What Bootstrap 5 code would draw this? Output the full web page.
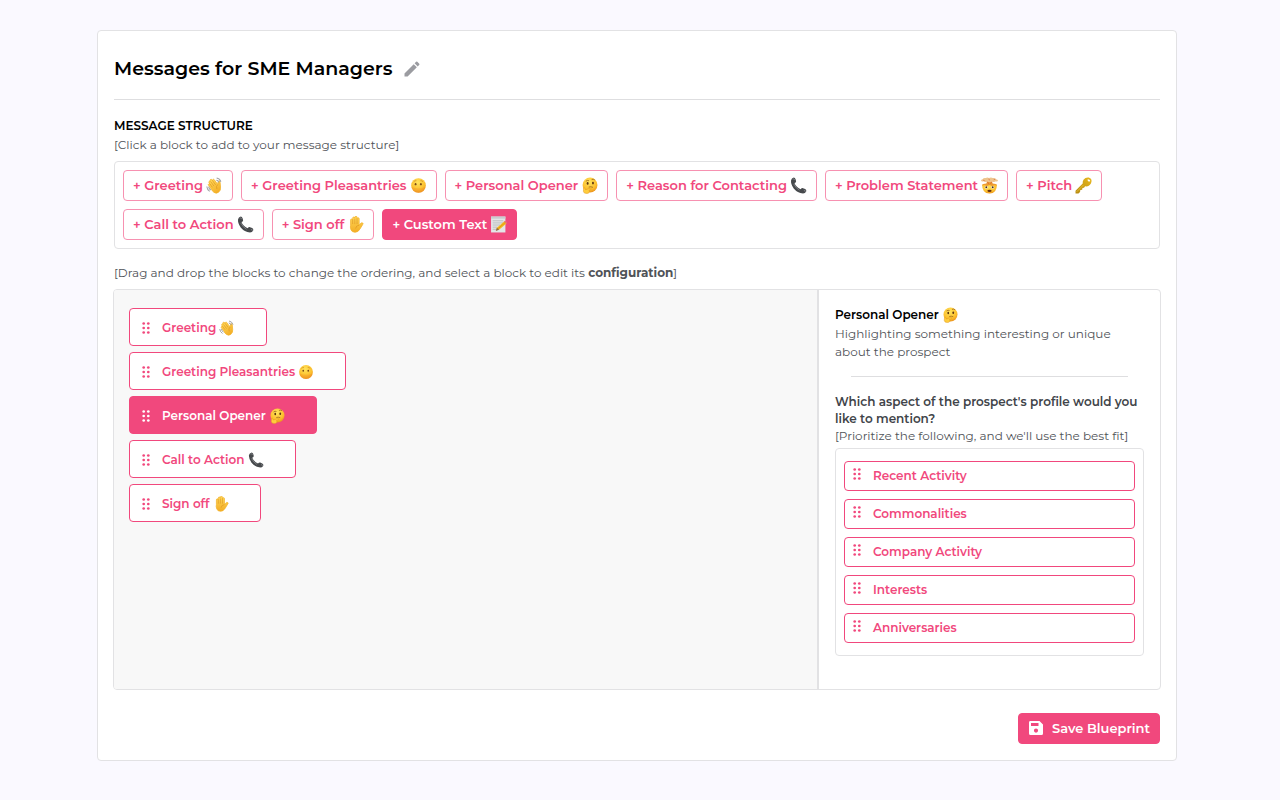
<!DOCTYPE html>
<html lang="en">
<head>
<meta charset="utf-8">
<meta name="viewport" content="width=device-width, initial-scale=1">
<title>Messages for SME Managers</title>
<link href="https://cdn.jsdelivr.net/npm/bootstrap@5.3.0/dist/css/bootstrap.min.css" rel="stylesheet">
<style>
  :root { --pink: #f1487d; --line: #e2e2e4; --soft: #505358; }
  body { background: #faf9ff; font-family: Montserrat, Inter, "Liberation Sans", sans-serif; font-size: 12px; line-height: 18px; color: #000; }
  .page { padding: 30px 103px 39px 97px; }
  .sheet { background: #fff; border: 1px solid var(--line); border-radius: 4px; padding: 16px; }
  .sheet-title { font-size: 19px; line-height: 28px; font-weight: 600; }
  .title-row { height: 53px; padding-bottom: 8px; border-bottom: 1px solid #dedee0; gap: 9px; }
  .pencil { width: 20px; height: 20px; color: #9b9ca1; }
  .label-caps { font-size: 12px; line-height: 20px; font-weight: 600; }
  .soft { color: var(--soft); }
  .hint { margin: 0 0 7px; }
  section + .hint { margin-top: 15px; }
  .outlined { border: 1px solid var(--line); border-radius: 4px; }
  .emo { width: 17px; height: 17px; flex: none; margin-left: 3px; }
  .btn-pink { --bs-btn-color: var(--pink); --bs-btn-bg: #fff; --bs-btn-border-color: #f791b1;
    --bs-btn-hover-color: #fff; --bs-btn-hover-bg: var(--pink); --bs-btn-hover-border-color: var(--pink);
    --bs-btn-active-color: #fff; --bs-btn-active-bg: var(--pink); --bs-btn-active-border-color: var(--pink);
    --bs-btn-font-size: 13px; --bs-btn-font-weight: 600; --bs-btn-line-height: 20px;
    --bs-btn-border-radius: 4px; padding: 4px 9px 5px; height: 31px; }
  .btn-pink.filled { --bs-btn-color: #fff; --bs-btn-bg: var(--pink); --bs-btn-border-color: var(--pink); }
  .workspace { margin: 0 -1px; min-height: 401px; overflow: hidden; }
  .canvas { background: #f8f8f8; border-right: 2px solid var(--line); padding: 18px 15px; gap: 6px; }
  .settings { flex: 0 0 341px; padding: 15px 16px; }
  .canvas, .settings { min-width: 0; }
  .block { height: 38px; padding: 1px 31px 0 8px; background: #fff; color: var(--pink); border: 1px solid var(--pink); border-radius: 4px; font-weight: 600; }
  .block.filled { background: var(--pink); color: #fff; }
  .block .emo, .settings .emo { width: 16px; height: 16px; }
  .grip { width: 16px; height: 16px; flex: none; }
  .options { margin-top: 3px; padding: 12px 8px; }
  .option { height: 30px; padding: 0 4px; color: var(--pink); border: 1px solid var(--pink); border-radius: 4px; font-weight: 600; }
  .option .grip { margin-bottom: 4px; }
  .question { line-height: 17px; font-weight: 600; color: #414449; }
  .rule { height: 1px; background: #dedee0; margin: 15px 16px 16px; }
  .actions { margin-top: 23px; }
</style>
</head>
<body>
<svg width="0" height="0" class="position-absolute" aria-hidden="true">
  <defs>
    <radialGradient id="face" cx=".45" cy=".3" r=".75"><stop offset="0" stop-color="#ffe45c"/><stop offset=".65" stop-color="#fcbf2d"/><stop offset="1" stop-color="#e88a1a"/></radialGradient>
    <linearGradient id="skin" x2="0" y2="1"><stop offset="0" stop-color="#ffd95a"/><stop offset="1" stop-color="#f3ad25"/></linearGradient>
    <linearGradient id="gold" x1="1" x2="0" y2="1"><stop offset="0" stop-color="#e9b91d"/><stop offset="1" stop-color="#b58a12"/></linearGradient>
    <g id="hand">
      <path d="M8 18V8.500q0-2 1.700-2t1.800 2V5q0-2 1.800-2t1.900 2V3.500q0-2 1.900-2t1.900 2V6q.2-2 1.900-1.800T22.600 6v12l2.200-3q2-2.400 4-1 1.200 1-.3 3L24 25q-3 6-8.500 6T8.500 26 8 18z" fill="url(#skin)" stroke="#f3b32c" stroke-width="1.400"/>
      <path d="M11.500 8v8M15.200 6v10M19 6v10M22.500 18q-5 0-6 6" fill="none" stroke="#d9911f" stroke-width="1.100"/>
    </g>
    <symbol id="palm" viewBox="0 0 32 32"><g transform="translate(-2 -1) scale(1.1 1.02)"><use href="#hand"/></g></symbol>
    <symbol id="wave" viewBox="0 0 32 32">
      <g transform="rotate(-36 16 16) translate(-1 1) scale(1.02 .96)"><use href="#hand"/></g>
      <path d="M20 2q6 1 8 7M19.500 6q3.500 0 5 4M1.500 18q.5 6 5.500 9M5 18q.5 4 4 6.500" fill="none" stroke="#a0a2a6" stroke-width="2"/>
    </symbol>
    <symbol id="calm" viewBox="0 0 32 32">
      <circle cx="16" cy="16" r="13.800" fill="url(#face)"/>
      <path d="M3 19q13 5 26 0-3 11-13 11T3 19z" fill="#f0902b" opacity=".35"/>
      <ellipse cx="10.500" cy="13.500" rx="1.700" ry="2.200" fill="#7b4a18"/><ellipse cx="20.500" cy="13.500" rx="1.700" ry="2.200" fill="#7b4a18"/>
      <path d="M7 9q2-2.500 5-2M19.500 7q3-.5 5 2" fill="none" stroke="#c98422" stroke-width="1.200"/>
    </symbol>
    <symbol id="think" viewBox="0 0 32 32">
      <circle cx="17" cy="15" r="14" fill="url(#face)"/>
      <ellipse cx="12.500" cy="12" rx="1.800" ry="2.400" fill="#5d3510"/><ellipse cx="22.500" cy="11.500" rx="1.800" ry="2.400" fill="#5d3510"/>
      <path d="M9 8q3-2.500 6-1M20 5q3-2 6 .5M14.500 19q4-1.500 8 .5" fill="none" stroke="#8b5418" stroke-width="1.300"/>
      <path d="M5 21q1.500-1.500 2.700.5l.8 2.500 9-3q2.500 0 1.500 2l-4 1.800q2.500 5.700-4 6.200-6 .5-6.500-4z" fill="#ffcd3c" stroke="#e09a22" stroke-width="1"/>
    </symbol>
    <symbol id="phone" viewBox="0 0 32 32">
      <path d="M2 6q1-4 5-5 2.500 0 3.500 3l1 4q0 2.500-3 3.500Q11 19 20 23q2-2.500 4.500-2l4 1.800q3 1.700 2 4.500-2 3.700-6 3.700Q14 30 7 21.500 1 13 2 6z" fill="#46494c"/>
      <path d="M5 4q3-2 4 2M26 25q4 0 2.500 3M7 13q4 8 11 12" fill="none" stroke="#85888b" stroke-width="1.500"/>
    </symbol>
    <symbol id="blast" viewBox="0 0 32 32">
      <path d="M2 14q0 17 14 17t14-17z" fill="url(#face)"/>
      <path d="M2 16q1-4 8-4l2-5h8l2 5q7 0 8 4l-5-1-4 2-5-2-5 2-4-2z" fill="#ec9a32"/>
      <path d="M0 7q0-3 3-3 2-3 6-2 3-2 6 0 4-2 7 0 4-1 6 2 4 0 4 3-1 2-4 1-2 2-6 1l-5 1-6-1q-4 1-6-1-4 1-5-1z" fill="#eec48d"/>
      <path d="M4 6l3 1M14 4l3 2M24 5l3-1M12 9l3 5M20 9l-2 4" stroke="#d45f32" stroke-width="1.200"/>
      <circle cx="10" cy="19.500" r="2.600" fill="#fff"/><circle cx="22" cy="19.500" r="2.600" fill="#fff"/><circle cx="10" cy="19.500" r="1.900" fill="#4c2b12"/><circle cx="22" cy="19.500" r="1.900" fill="#4c2b12"/>
      <ellipse cx="16" cy="26" rx="4" ry="2.200" fill="#69300f"/>
    </symbol>
    <symbol id="key" viewBox="0 0 32 32">
      <path fill-rule="evenodd" d="M16 5q4-5 10-4 6 2 5 8-2 8-9 9l-3-.5-2 2.500-3 .5-.5 3.500-3.500.5-.5 3.500-3 3H1v-5l13.500-14Q14 8 16 5zm8-1q-1 2 .8 3.800Q27 9 28.500 8q1-3-4.500-4z" fill="url(#gold)"/>
      <path d="M3 28l13-13" stroke="#f0cc4b" stroke-width="1.300"/>
    </symbol>
    <symbol id="memo" viewBox="0 0 32 32">
      <path d="M2 1h27v30H2z" fill="#e4e6e8"/><path d="M2 1h27v4H2z" fill="#c9cccf"/>
      <path d="M5 9h20M5 13h20M5 17h14M5 21h9M5 25h7" stroke="#a9adb1" stroke-width="1.300"/>
      <path d="M11 27l2-5 14-12 4 4-14 12z" fill="#f5b921"/><path d="M13 22l4 4-6 2z" fill="#8b6b4a"/><path d="M26 11l2-2q3 0 4 4l-1.500 1.500z" fill="#e8707c"/><path d="M15 24l14-12" stroke="#d48b12" stroke-width="1.200"/>
    </symbol>
    <symbol id="dots" viewBox="0 0 16 16">
      <g fill="currentColor"><circle cx="5.700" cy="3.500" r="1.350"/><circle cx="10.300" cy="3.500" r="1.350"/><circle cx="5.700" cy="8" r="1.350"/><circle cx="10.300" cy="8" r="1.350"/><circle cx="5.700" cy="12.500" r="1.350"/><circle cx="10.300" cy="12.500" r="1.350"/></g>
    </symbol>
  </defs>
</svg>

<main class="page">
  <div class="sheet">
    <header class="title-row d-flex align-items-center">
      <h1 class="sheet-title m-0">Messages for SME Managers</h1>
      <button type="button" class="btn border-0 p-0 d-flex" aria-label="Rename">
        <svg class="pencil" viewBox="0 0 24 24" fill="currentColor"><path d="M3 17.250V21h3.750L17.810 9.940l-3.750-3.750L3 17.250zM20.710 7.040a1 1 0 0 0 0-1.410l-2.340-2.340a1 1 0 0 0-1.410 0l-1.830 1.830 3.750 3.750 1.830-1.830z"/></svg>
      </button>
    </header>

    <section>
      <h2 class="label-caps text-uppercase m-0 mt-3">Message structure</h2>
      <p class="soft hint">[Click a block to add to your message structure]</p>
      <div class="outlined d-flex flex-wrap gap-2 p-2">
        <button type="button" class="btn btn-pink d-flex align-items-center">+ Greeting <svg class="emo"><use href="#wave"/></svg></button>
        <button type="button" class="btn btn-pink d-flex align-items-center">+ Greeting Pleasantries <svg class="emo"><use href="#calm"/></svg></button>
        <button type="button" class="btn btn-pink d-flex align-items-center">+ Personal Opener <svg class="emo"><use href="#think"/></svg></button>
        <button type="button" class="btn btn-pink d-flex align-items-center">+ Reason for Contacting <svg class="emo"><use href="#phone"/></svg></button>
        <button type="button" class="btn btn-pink d-flex align-items-center">+ Problem Statement <svg class="emo"><use href="#blast"/></svg></button>
        <button type="button" class="btn btn-pink d-flex align-items-center">+ Pitch <svg class="emo"><use href="#key"/></svg></button>
        <button type="button" class="btn btn-pink d-flex align-items-center">+ Call to Action <svg class="emo"><use href="#phone"/></svg></button>
        <button type="button" class="btn btn-pink d-flex align-items-center">+ Sign off <svg class="emo"><use href="#palm"/></svg></button>
        <button type="button" class="btn btn-pink filled d-flex align-items-center">+ Custom Text <svg class="emo"><use href="#memo"/></svg></button>
      </div>
    </section>

    <p class="soft hint">[Drag and drop the blocks to change the ordering, and select a block to edit its <strong>configuration</strong>]</p>

    <div class="workspace outlined d-flex">
      <div class="canvas flex-grow-1 d-flex flex-column align-items-start">
        <div class="block d-flex align-items-center"><svg class="grip me-2"><use href="#dots"/></svg>Greeting <svg class="emo"><use href="#wave"/></svg></div>
        <div class="block d-flex align-items-center"><svg class="grip me-2"><use href="#dots"/></svg>Greeting Pleasantries <svg class="emo"><use href="#calm"/></svg></div>
        <div class="block filled d-flex align-items-center"><svg class="grip me-2"><use href="#dots"/></svg>Personal Opener <svg class="emo"><use href="#think"/></svg></div>
        <div class="block d-flex align-items-center"><svg class="grip me-2"><use href="#dots"/></svg>Call to Action <svg class="emo"><use href="#phone"/></svg></div>
        <div class="block d-flex align-items-center"><svg class="grip me-2"><use href="#dots"/></svg>Sign off <svg class="emo"><use href="#palm"/></svg></div>
      </div>
      <aside class="settings">
        <h2 class="label-caps d-flex align-items-center m-0">Personal Opener <svg class="emo"><use href="#think"/></svg></h2>
        <p class="soft m-0">Highlighting something interesting or unique about the prospect</p>
        <div class="rule"></div>
        <p class="question m-0">Which aspect of the prospect's profile would you like to mention?</p>
        <p class="soft m-0">[Prioritize the following, and we'll use the best fit]</p>
        <div class="outlined options d-flex flex-column gap-2">
          <div class="option d-flex align-items-center"><svg class="grip me-2"><use href="#dots"/></svg>Recent Activity</div>
          <div class="option d-flex align-items-center"><svg class="grip me-2"><use href="#dots"/></svg>Commonalities</div>
          <div class="option d-flex align-items-center"><svg class="grip me-2"><use href="#dots"/></svg>Company Activity</div>
          <div class="option d-flex align-items-center"><svg class="grip me-2"><use href="#dots"/></svg>Interests</div>
          <div class="option d-flex align-items-center"><svg class="grip me-2"><use href="#dots"/></svg>Anniversaries</div>
        </div>
      </aside>
    </div>

    <footer class="actions d-flex justify-content-end">
      <button type="button" class="btn btn-pink filled d-flex align-items-center gap-2"><svg width="16" height="16" viewBox="0 0 16 16"><path fill="currentColor" fill-rule="evenodd" d="M2 1h9.500L15 4.500V13.500q0 1.500-1.500 1.500h-11Q1 15 1 13.500V2.500Q1 1 2 1zm1 2v3h7.500V3zm5 5.500a2.100 2.100 0 1 0 0 4.200 2.100 2.100 0 0 0 0-4.200z"/></svg>Save Blueprint</button>
    </footer>
  </div>
</main>
<script src="https://cdn.jsdelivr.net/npm/bootstrap@5.3.0/dist/js/bootstrap.bundle.min.js"></script>
</body>
</html>
